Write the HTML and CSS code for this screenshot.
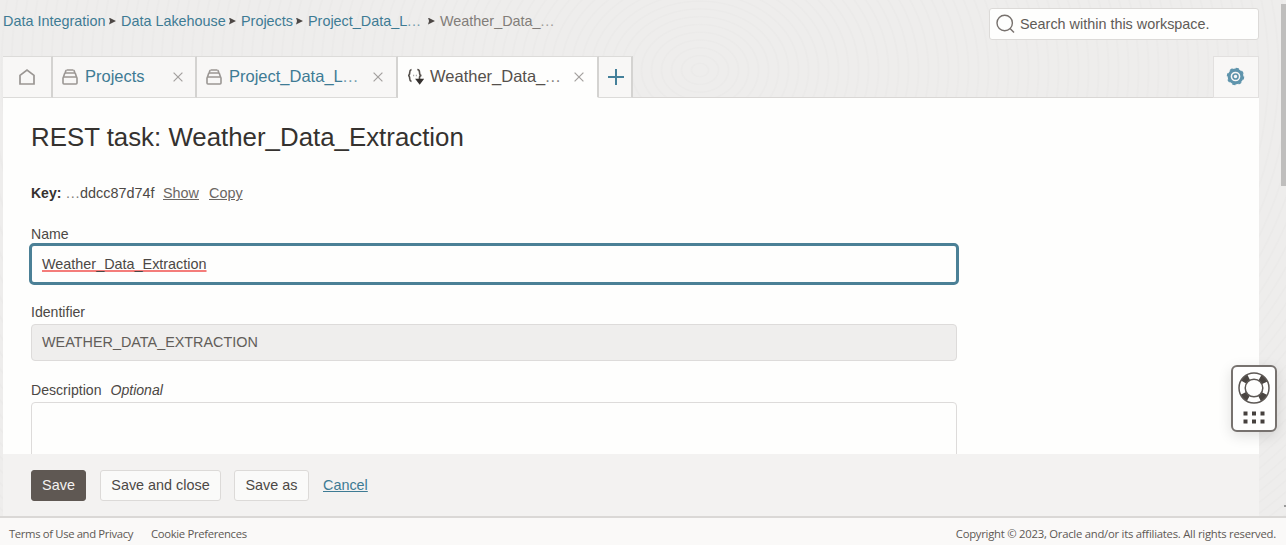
FILE: index.html
```html
<!DOCTYPE html>
<html lang="en">
<head>
<meta charset="utf-8">
<title>REST task: Weather_Data_Extraction</title>
<link rel="stylesheet" href="styles.css">
</head>
<body>
<div class="app">
  <div class="workspace">
    <header class="topbar">
      <nav class="crumbs">
        <a class="crumb c1">Data Integration</a><i class="sep"></i>
        <a class="crumb c2">Data Lakehouse</a><i class="sep"></i>
        <a class="crumb c3">Projects</a><i class="sep"></i>
        <a class="crumb c4">Project_Data_L<span class="dots">...</span></a><i class="sep"></i>
        <span class="crumb current">Weather_Data_<span class="dots">...</span></span>
      </nav>
      <div class="search">
        <svg width="20" height="20" viewBox="0 0 20 20" fill="none" stroke="#77716d" stroke-width="1.4"><circle cx="8.700" cy="9" r="7.700"/><path d="M14 14.500l4 4"/></svg>
        <span>Search within this workspace.</span>
      </div>
    </header>
    <div class="tabs">
      <div class="tab home">
        <svg width="18" height="18" viewBox="0 0 18 18" fill="none" stroke="#9a9693" stroke-width="1.700"><path d="M2 7.400L9 2l7 5.400V16H2z"/></svg>
      </div>
      <div class="tab projects">
        <svg width="16" height="16" viewBox="0 0 16 16" fill="none" stroke="#9a9693" stroke-width="1.600"><path d="M4.500 1h7M3 4h10"/><path d="M3 4l1.200-3M13 4l-1.200-3"/><rect x="1" y="8" width="14" height="7" rx="1"/><path d="M1.500 8l1.300-4M14.500 8l-1.300-4"/></svg>
        <span class="label">Projects</span>
        <svg class="close" width="10" height="10" viewBox="0 0 10 10" stroke="#a4a19f" stroke-width="1.200"><path d="M.6.6l8.800 8.800M9.400.6L.6 9.400"/></svg>
      </div>
      <div class="tab project">
        <svg width="16" height="16" viewBox="0 0 16 16" fill="none" stroke="#9a9693" stroke-width="1.600"><path d="M4.500 1h7M3 4h10"/><path d="M3 4l1.200-3M13 4l-1.200-3"/><rect x="1" y="8" width="14" height="7" rx="1"/><path d="M1.500 8l1.300-4M14.500 8l-1.300-4"/></svg>
        <span class="label">Project_Data_L<span class="dots">...</span></span>
        <svg class="close" width="10" height="10" viewBox="0 0 10 10" stroke="#a4a19f" stroke-width="1.200"><path d="M.6.6l8.800 8.800M9.400.6L.6 9.400"/></svg>
      </div>
      <div class="tab active">
        <svg width="17" height="17" viewBox="0 0 17 17" fill="none" stroke="#55504c" stroke-width="1.600"><path d="M4.500 1.500C2.700 2 2.700 3 2.700 4.500 2.700 6.500 2.300 7.500 1 7.500c1.300 0 1.700 1 1.700 3 0 1.500 0 2.500 1.800 3"/><path d="M10.300 1.500c1.900.2 2.200 1 2.200 2.700 0 1.900.5 3.300 2 3.300-1.500 0-2 .8-2 2.300v2"/><path d="M6 7.500h1.200M8.800 7.500H10" stroke="#aaa"/><path d="M9.700 11.500h6L12.700 15.500z" fill="#35312f" stroke="#35312f"/></svg>
        <span class="label">Weather_Data_<span class="dots">...</span></span>
        <svg class="close" width="10" height="10" viewBox="0 0 10 10" stroke="#a4a19f" stroke-width="1.200"><path d="M.6.6l8.800 8.800M9.400.6L.6 9.400"/></svg>
      </div>
      <div class="tab add">
        <svg width="16" height="16" viewBox="0 0 16 16" stroke="#44809a" stroke-width="2"><path d="M8 0v16M0 8h16"/></svg>
      </div>
      <div class="filler"></div>
      <div class="tab settings">
        <svg width="19" height="19" viewBox="0 0 20 20" fill="none" stroke="#5f94ac"><circle cx="10" cy="10" r="6.700" stroke-width="3.200"/><circle cx="10" cy="10" r="8.500" stroke-width="1.400" stroke-dasharray="3.340 3.340"/><circle cx="10" cy="10" r="2.700" stroke-width="1.700"/></svg>
      </div>
    </div>
    <main class="panel">
      <h1 class="title">REST task: Weather_Data_Extraction</h1>
      <div class="key"><b>Key:</b><span class="hash"><span class="dots">...</span>ddcc87d74f</span><a>Show</a><a>Copy</a></div>
      <div class="field-label name-label">Name</div>
      <div class="input focused"><span class="misspelt">Weather_Data_Extraction</span></div>
      <div class="field-label id-label">Identifier</div>
      <div class="input readonly">WEATHER_DATA_EXTRACTION</div>
      <div class="field-label desc-label">Description <em>Optional</em></div>
      <div class="textarea"></div>
    </main>
    <div class="actions">
      <div class="btn primary">Save</div>
      <div class="btn wide">Save and close</div>
      <div class="btn mid">Save as</div>
      <a class="cancel">Cancel</a>
    </div>
  </div>
  <footer class="footer">
    <span class="terms">Terms of Use and Privacy</span>
    <span class="cookies">Cookie Preferences</span>
    <span class="copyright">Copyright © 2023, Oracle and/or its affiliates. All rights reserved.</span>
  </footer>
  <div class="scrollbar"></div>
  <div class="resize"></div>
  <div class="help">
    <svg width="32" height="32" viewBox="0 0 32 32" fill="none"><circle cx="16" cy="16" r="12" stroke="#4a4542" stroke-width="6" stroke-dasharray="7 11.850" stroke-dashoffset="-5.925"/><circle cx="16" cy="16" r="15" stroke="#5c5754" stroke-width="1.500"/><circle cx="16" cy="16" r="8.800" stroke="#5c5754" stroke-width="1.500"/></svg>
    <svg width="22" height="14" viewBox="0 0 22 14" fill="#45403d"><path d="M.5.5h4v4h-4zM9 .5h4v4H9zM17.500.5h4v4h-4zM.5 8.500h4v4h-4zM9 8.500h4v4H9zM17.500 8.500h4v4h-4z"/></svg>
  </div>
</div>
</body>
</html>
```
FILE: styles.css
```css
* { box-sizing: border-box; }
body {
  margin: 0;
  font-family: "Liberation Sans", Arial, sans-serif;
  font-size: 14.4px;
  color: #4c4845;
}
.app {
  position: relative;
  width: 1286px;
  height: 545px;
  overflow: hidden;
  display: flex;
  flex-direction: column;
  background:
    repeating-radial-gradient(ellipse 90px 70px at 700px 70px, transparent 0 7px, rgba(0,0,0,.012) 8px 9px, transparent 10px),
    #eeedec;
}
.workspace {
  height: 516px;
  padding: 0 27px 0 3px;
  display: flex;
  flex-direction: column;
}
.topbar {
  height: 56px;
  display: flex;
  justify-content: space-between;
  align-items: flex-start;
}
.crumbs {
  display: flex;
  align-items: center;
  height: 20px;
  margin-top: 11px;
  white-space: nowrap;
}
.crumb { color: #3e7b94; }
.c1 { width: 102px; }
.c2 { width: 104px; }
.c3 { width: 51px; }
.c4 { width: 116px; }
.current { color: #827d79; }
.dots { letter-spacing: .7px; opacity: .7; }
.sep {
  width: 7px;
  height: 7px;
  margin: 0 5px 0 4px;
  background: #4d4846;
  clip-path: polygon(0 0, 100% 50%, 0 100%, 15% 50%);
}
.search {
  width: 270px;
  height: 32px;
  margin-top: 8px;
  padding-left: 6px;
  display: flex;
  align-items: center;
  gap: 4px;
  background: #fefefd;
  border: 1px solid #dcdad8;
  border-radius: 3px;
  color: #605b57;
}
.tabs { height: 42px; display: flex; }
.tab {
  display: flex;
  align-items: center;
  padding: 0 0 1px 9px;
  background: #f8f7f6;
  border: 1px solid #dcdbd9;
  border-left: 0;
  border-right: 2px solid #d4d3d1;
  font-size: 16.5px;
  color: #3e7b94;
  white-space: nowrap;
}
.tab .label { margin-left: 7px; }
.close { margin-left: auto; margin-right: 12px; }
.home { width: 50px; padding-left: 15px; }
.projects { width: 144px; }
.project { width: 201px; }
.project .close { margin-right: 13px; }
.active {
  width: 201px;
  background: #fefefd;
  border-bottom-color: #fefefd;
  color: #55504c;
}
.active .label { margin-left: 6px; }
.active .close { margin-right: 13px; }
.add { width: 34px; }
.filler { flex: 1; border-bottom: 1px solid #d9d7d5; }
.settings {
  width: 46px;
  padding: 0 1px 2px 0;
  justify-content: center;
  border: 1px solid #e2e0df;
}
.panel {
  height: 356px;
  padding: 0 302px 0 28px;
  background: #fefefd;
  overflow: hidden;
}
.title {
  margin: 23px 0 0;
  font-size: 25.85px;
  line-height: 32px;
  font-weight: 400;
  color: #35322f;
  white-space: nowrap;
}
.key {
  display: flex;
  height: 20px;
  line-height: 20px;
  margin-top: 30px;
}
.key .hash { width: 97px; margin-left: 3px; }
.key b { width: 32px; font-size: 14px; color: #35312f; }
.key a { width: 36px; margin-right: 10px; text-decoration: underline; color: #6b6662; }
.field-label { height: 20px; line-height: 20px; font-size: 14.1px; }
.name-label { margin-top: 21px; }
.input {
  height: 37px;
  width: 926px;
  padding-left: 10px;
  line-height: 35px;
  border: 1px solid #dddbda;
  border-radius: 4px;
}
.focused {
  width: 930px;
  height: 42px;
  margin: -1px 0 0 -2px;
  padding-left: 10px;
  line-height: 36px;
  border: 3px solid #4b8096;
  border-radius: 5px;
}
.misspelt { text-decoration: underline #f47c7a 2px; text-underline-offset: 1px; }
.id-label { margin-top: 17px; }
.readonly { margin-top: 2px; background: #efeeed; color: #625d59; }
.desc-label { margin-top: 19px; }
.desc-label em { margin-left: 5px; }
.textarea {
  width: 926px;
  height: 80px;
  margin-top: 2px;
  border: 1px solid #dddbda;
  border-radius: 4px;
}
.actions {
  height: 62px;
  padding-left: 28px;
  display: flex;
  align-items: center;
  background: #f3f2f1;
}
.btn {
  height: 31px;
  display: flex;
  align-items: center;
  justify-content: center;
  background: #fafaf9;
  border: 1px solid #dcdad8;
  border-radius: 3px;
}
.primary { width: 55px; background: #5f5853; border-color: #5f5853; color: #f5f3f1; }
.wide { width: 121px; margin-left: 14px; }
.mid { width: 75px; margin-left: 13px; }
.cancel { margin-left: 14px; color: #3e7b94; text-decoration: underline; }
.footer {
  height: 29px;
  padding: 3px 10px 0 9px;
  display: flex;
  align-items: center;
  background: #faf9f8;
  border-top: 2px solid #dad8d6;
  font-family: "Open Sans", sans-serif;
  font-size: 11.3px;
  letter-spacing: -.25px;
  color: #5d5854;
  white-space: nowrap;
}
.terms { width: 142px; letter-spacing: -.36px; }
.cookies { letter-spacing: -.33px; }
.copyright { margin-left: auto; }
.scrollbar {
  position: absolute;
  left: 1281px;
  top: 4px;
  width: 5px;
  height: 182px;
  background: #bfbebd;
}
.resize {
  position: absolute;
  left: 1284px;
  top: 505px;
  width: 2px;
  height: 2px;
  background: #999;
}
.help {
  position: absolute;
  left: 1231px;
  top: 365px;
  width: 46px;
  height: 67px;
  padding-top: 5px;
  display: flex;
  flex-direction: column;
  align-items: center;
  gap: 7px;
  background: #fefefe;
  border: 2px solid #77726f;
  border-radius: 6px;
  box-shadow: 0 4px 14px rgba(0, 0, 0, .12);
}
```
